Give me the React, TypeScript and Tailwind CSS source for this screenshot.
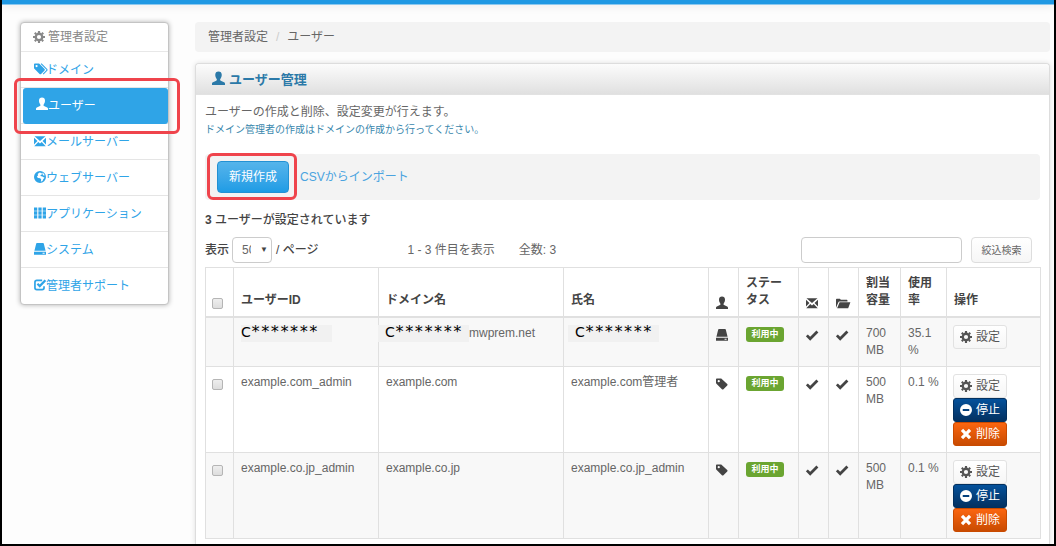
import type { ReactNode } from 'react';

type IconName =
  | 'cog'
  | 'tags'
  | 'tag'
  | 'user'
  | 'mail'
  | 'globe'
  | 'grid'
  | 'drive'
  | 'check'
  | 'ok'
  | 'folder'
  | 'minus'
  | 'remove';

const shapes: Record<IconName, ReactNode> = {
  cog: (
    <>
      <circle cx="7" cy="7" r="3.8" fill="none" stroke="currentColor" strokeWidth="2.7" />
      <path
        d="M7 0v2.500M7 11.500v2.500M0 7h2.500M11.500 7h2.500M2.100 2.100l1.600 1.600M10.300 10.300l1.600 1.600M2.100 11.900l1.600-1.600M10.300 3.700l1.600-1.600"
        stroke="currentColor"
        strokeWidth="2.5"
      />
    </>
  ),
  tags: (
    <>
      <path
        fillRule="evenodd"
        d="M0 1.6v4.1c0 .4.2.8.5 1.1l6 6c.6.6 1.200.6 1.800 0l4-4c.6-.6.6-1.200 0-1.800l-6-6C6 .7 5.600.6 5.200.6H1C.4.6 0 1 0 1.600zM3 2.300a1.300 1.300 0 1 1 0 2.600 1.300 1.300 0 0 1 0-2.600z"
      />
      <path d="M8.300.8l6.700 6.700c.4.4.4.8 0 1.200l-4.300 4.300" fill="none" stroke="currentColor" strokeWidth="1.200" />
    </>
  ),
  tag: (
    <path
      fillRule="evenodd"
      d="M0 1.800v3.800c0 .5.2.900.5 1.200l6.400 6.300c.6.6 1.200.6 1.800 0l4.400-4.300c.6-.6.6-1.200 0-1.800L6.700 1.100C6.400.8 6 .6 5.500.6H1.200C.5.6 0 1.100 0 1.800zM3.200 2.400a1.300 1.300 0 1 1 0 2.600 1.300 1.300 0 0 1 0-2.600z"
    />
  ),
  user: (
    <path d="M7-.5C4.800-.5 3.500.8 3.500 3c0 1.900.6 3.400 1.500 4.500.5.6.3 1.500-.4 1.800L1 11c-.7.300-1 .800-1 1.500V14h14v-1.500c0-.7-.3-1.200-1-1.500L9.400 9.300c-.7-.3-.9-1.200-.4-1.800.9-1.100 1.500-2.600 1.500-4.500C10.500.8 9.200-.5 7-.5z" />
  ),
  mail: <path d="M.6 1.500h12.800L7 7zM0 3.300 4 7 0 11zM14 3.300 10 7l4 4zM.3 13 5 8.300l2 1.600 2-1.600L13.700 13z" />,
  globe: (
    <path
      fillRule="evenodd"
      d="M7 0a7 7 0 1 1 0 14A7 7 0 0 1 7 0zM6.500 1.800 4.300 3.500l.5 1.600L3.300 6.600l1.400 1.500 2.500.3 1.200 1.500-.5 2.600 2-.7.8-2.300 1.600-1.700-2.500-1.500-2.300-.4.300-1.300 1.600-.7-.6-1.700zM9.600 1.800l.4 2.300 1.500 1.300.9-.3-.8-1.800z"
    />
  ),
  grid: (
    <path d="M0 .5h3.800v3.800H0zM5.100.5h3.800v3.800H5.100zM10.200.5H14v3.800h-3.800zM0 5.100h3.800v3.800H0zM5.100 5.100h3.800v3.800H5.100zM10.200 5.100H14v3.800h-3.800zM0 9.700h3.800v3.800H0zM5.100 9.700h3.800v3.800H5.100zM10.200 9.700H14v3.800h-3.800z" />
  ),
  drive: (
    <path
      fillRule="evenodd"
      d="M3.400 0h7.200c.4 0 .7.2.8.6L13.500 9H.5L2.600.6c.1-.4.400-.6.800-.6zM0 10.300h14v3.500H0zM10 11.500v1h2.400v-1z"
    />
  ),
  check: (
    <>
      <path
        d="M9.500 1.500H3.300c-1.300 0-2.200.9-2.200 2.200v6.500c0 1.300.9 2.200 2.200 2.200h6.200c1.300 0 2.200-.9 2.200-2.200V8.500"
        fill="none"
        stroke="currentColor"
        strokeWidth="2"
      />
      <path d="M4 5.600l2.700 2.700 6.600-6.800" fill="none" stroke="currentColor" strokeWidth="2.600" />
    </>
  ),
  ok: <path d="M1 7.400l3.900 4 8.400-8.500" fill="none" stroke="currentColor" strokeWidth="3.200" />,
  folder: (
    <path d="M0 12.500V3.200C0 2.500.5 2 1.200 2h3.400l1 1.200h6.600c.7 0 1.200.5 1.200 1.200v.8H4c-.6 0-1 .3-1.200.8zM4.200 6.200h12.600L14.200 13H1.300z" />
  ),
  minus: <path fillRule="evenodd" d="M7 0a7 7 0 1 1 0 14A7 7 0 0 1 7 0zM3.200 5.800v2.500h7.600V5.800z" />,
  remove: <path d="M2.300 2.300l9.400 9.400M11.700 2.300l-9.400 9.400" stroke="currentColor" strokeWidth="3.800" />,
};

function Icon({ name, className = 'h-3 w-3' }: { name: IconName; className?: string }) {
  return (
    <svg viewBox="0 0 14 14" className={`shrink-0 overflow-visible ${className}`} fill="currentColor" aria-hidden="true">
      {shapes[name]}
    </svg>
  );
}

const menu: { label: string; icon: IconName; active?: boolean }[] = [
  { label: 'ドメイン', icon: 'tags' },
  { label: 'ユーザー', icon: 'user', active: true },
  { label: 'メールサーバー', icon: 'mail' },
  { label: 'ウェブサーバー', icon: 'globe' },
  { label: 'アプリケーション', icon: 'grid' },
  { label: 'システム', icon: 'drive' },
  { label: '管理者サポート', icon: 'check' },
];

type User = {
  id: string;
  domain: string;
  name: string;
  role: IconName;
  quota: string;
  usage: string;
  masked?: boolean;
};

const users: User[] = [
  { id: 'C*******', domain: 'mwprem.net', name: 'C*******', role: 'drive', quota: '700 MB', usage: '35.1 %', masked: true },
  { id: 'example.com_admin', domain: 'example.com', name: 'example.com管理者', role: 'tag', quota: '500 MB', usage: '0.1 %' },
  { id: 'example.co.jp_admin', domain: 'example.co.jp', name: 'example.co.jp_admin', role: 'tag', quota: '500 MB', usage: '0.1 %' },
];

const th = 'border border-[#e0e0e0] border-b-2 p-[7px] text-left align-bottom font-bold';
const td = 'border border-[#e0e0e0] pt-[7px] pr-1 pl-[7px] align-top';
const box =
  '-ml-px block h-[11px] w-[11px] appearance-none rounded-[2px] border border-[#b5b5b5] bg-gradient-to-b from-[#eeeeee] to-[#dddddd]';

function Masked({ className = '' }: { className?: string }) {
  return (
    <span className={`flex h-[17px] w-[91px] items-start bg-[#f1f1f1] text-black ${className}`}>
      <span className="font-['DejaVu_Sans',sans-serif] text-sm leading-[14px]">C</span>
      <span className="font-['DejaVu_Sans_Mono',monospace] text-base leading-[14px]">*******</span>
    </span>
  );
}

function Highlight({ className }: { className: string }) {
  return <span className={`pointer-events-none absolute z-10 rounded-md border-3 border-[#ef444c] ${className}`} />;
}

function Sidebar() {
  return (
    <nav className="w-[149px] shrink-0 self-start rounded border border-[#c4c4c4] bg-white shadow-[0_0_5px_rgba(0,0,0,0.3)]">
      <h2 className="flex h-[29px] items-center gap-[3px] border-b border-[#e8e8e8] px-3 text-[#888888]">
        <Icon name="cog" />
        管理者設定
      </h2>
      <ul>
        {menu.map((m) => (
          <li key={m.label} className="relative h-9 border-b border-[#e5e5e5] last:border-transparent">
            <a
              href="#"
              className={
                m.active
                  ? 'ml-0.5 flex h-9 items-center rounded-[3px] bg-[#2fa4e7] px-[13px] text-white'
                  : 'flex h-full items-center px-[13px] pt-0.5 text-[#2fa4e7]'
              }
            >
              <Icon name={m.icon} className="mb-1 h-3 w-3" />
              {m.label}
            </a>
            {m.active && <Highlight className="-top-[10px] -right-3 -bottom-[11px] -left-[7px]" />}
          </li>
        ))}
      </ul>
    </nav>
  );
}

function ActionButton({ icon, label, tone }: { icon: IconName; label: string; tone: string }) {
  return (
    <button type="button" className={`flex h-6 w-[54px] items-center justify-center gap-1 rounded-[3px] border ${tone}`}>
      <Icon name={icon} />
      {label}
    </button>
  );
}

function UserTable() {
  return (
    <table className="mt-1 w-full table-fixed border-collapse">
      <colgroup>
        <col className="w-[28px]" />
        <col className="w-[145px]" />
        <col className="w-[185px]" />
        <col className="w-[145px]" />
        <col className="w-[30px]" />
        <col className="w-[60px]" />
        <col className="w-[30px]" />
        <col className="w-[30px]" />
        <col className="w-[42px]" />
        <col className="w-[46px]" />
        <col className="w-[94px]" />
      </colgroup>
      <thead className="text-[#444444]">
        <tr>
          <th className={th}>
            <input type="checkbox" aria-label="すべて選択" className={box} />
          </th>
          <th className={th}>ユーザーID</th>
          <th className={th}>ドメイン名</th>
          <th className={th}>氏名</th>
          <th className={th}><Icon name="user" /></th>
          <th className={th}>ステータス</th>
          <th className={th}><Icon name="mail" /></th>
          <th className={th}><Icon name="folder" /></th>
          <th className={th}>割当容量</th>
          <th className={th}>使用率</th>
          <th className={th}>操作</th>
        </tr>
      </thead>
      <tbody>
        {users.map((u) => (
          <tr key={u.domain} className="odd:bg-[#f8f8f8]">
            <td className={td}>
              {!u.masked && <input type="checkbox" aria-label={u.id} className={`mt-[5px] ${box}`} />}
            </td>
            <td className={td}>{u.masked ? <Masked /> : u.id}</td>
            <td className={td}>
              {u.masked ? (
                <span className="-ml-2 flex">
                  <Masked className="pl-[7px]" />
                  {u.domain}
                </span>
              ) : (
                u.domain
              )}
            </td>
            <td className={td}>{u.masked ? <Masked className="-ml-[3px] pl-[7px]" /> : u.name}</td>
            <td className={`${td} text-[#444444]`}>
              <span className="flex h-[19px] items-center"><Icon name={u.role} /></span>
            </td>
            <td className={td}>
              <span className="mt-0.5 inline-flex h-[15px] w-[38px] items-center justify-center rounded-[3px] bg-[#6ba531] text-[9px] leading-none font-bold text-white">
                利用中
              </span>
            </td>
            <td className={`${td} text-[#444444]`}>
              <span className="flex h-[19px] items-center"><Icon name="ok" /></span>
            </td>
            <td className={`${td} text-[#444444]`}>
              <span className="flex h-[19px] items-center"><Icon name="ok" /></span>
            </td>
            <td className={`${td} pb-[7px]`}>{u.quota}</td>
            <td className={td}>{u.usage}</td>
            <td className={`${td} pb-[6px]`}>
              <div className="-ml-px">
                <ActionButton
                  icon="cog"
                  label="設定"
                  tone="border-[#e2e2e2] bg-gradient-to-b from-white to-[#f6f6f6] text-[#555555]"
                />
                {!u.masked && (
                  <>
                    <ActionButton
                      icon="minus"
                      label="停止"
                      tone="border-[#02305f] bg-gradient-to-b from-[#04519b] to-[#033161] text-white"
                    />
                    <ActionButton
                      icon="remove"
                      label="削除"
                      tone="border-[#c94a00] bg-gradient-to-b from-[#fb6610] to-[#c94b02] text-white"
                    />
                  </>
                )}
              </div>
            </td>
          </tr>
        ))}
      </tbody>
    </table>
  );
}

export default function App() {
  return (
    <div className="flex min-h-screen flex-col border-x-2 border-b-2 border-black bg-[#fdfdfd] font-['Liberation_Sans','Noto_Sans_CJK_JP',sans-serif] text-xs leading-[17px] text-[#666666]">
      <header className="h-[5px] border-b border-[#8cc8ee] bg-[#1f98e3] shadow-[0_1px_8px_rgba(0,0,0,0.1)]" />
      <div className="flex flex-1 gap-[26px] pt-[17px] pr-1 pl-[18px]">
        <Sidebar />
        <main className="flex min-w-0 flex-1 flex-col">
          <ol className="flex h-[30px] items-center rounded bg-[#f3f3f3] px-[13px]">
            <li>管理者設定</li>
            <li className="px-2 text-[#cccccc]">/</li>
            <li>ユーザー</li>
          </ol>

          <section className="mt-[11px] flex-1 rounded-t border border-b-0 border-[#dddddd] bg-white shadow-[0_0_5px_rgba(0,0,0,0.12)]">
            <h1 className="flex h-[31px] items-center gap-1 rounded-t border-b border-[#e2e2e2] bg-gradient-to-b from-[#fcfcfc] to-[#e0e0e0] px-4 text-[13px] font-bold text-[#2b79a8]">
              <Icon name="user" className="mb-0.5 h-[13px] w-[13px]" />
              ユーザー管理
            </h1>
            <div className="px-[9px] pt-[9px] pb-1">
              <p>ユーザーの作成と削除、設定変更が行えます。</p>
              <p className="text-[10px] text-[#3a87ad]">ドメイン管理者の作成はドメインの作成から行ってください。</p>

              <div className="mt-4 flex h-[46px] items-center gap-[11px] rounded bg-[#f3f3f3] px-3">
                <div className="relative">
                  <button
                    type="button"
                    className="block h-8 rounded border border-[#2391d3] bg-gradient-to-b from-[#54b4eb] to-[#1d9ce5] px-[11px] text-white"
                  >
                    新規作成
                  </button>
                  <Highlight className="-top-2 -right-2 -bottom-[7px] -left-[10px]" />
                </div>
                <a href="#" className="text-[#4aa3df]">CSVからインポート</a>
              </div>

              <p className="mt-3 font-medium text-[#444444]">
                <span className="font-bold">3</span> ユーザーが設定されています
              </p>

              <div className="mt-2 flex h-[26px] items-center">
                <label htmlFor="per-page" className="mr-[3px] font-medium text-[#444444]">表示</label>
                <span className="relative">
                  <select
                    id="per-page"
                    defaultValue="50"
                    className="block h-[26px] w-10 appearance-none rounded border border-[#cccccc] bg-white pr-5 pl-[9px]"
                  >
                    <option>50</option>
                  </select>
                  <span className="pointer-events-none absolute top-1 right-1 text-[8px] text-[#444444]">▼</span>
                </span>
                <span className="ml-1 font-medium text-[#444444]">/ ページ</span>
                <span className="ml-[89px]">1 - 3 件目を表示</span>
                <span className="ml-6">全数: 3</span>
                <input
                  type="search"
                  aria-label="絞込検索"
                  className="ml-auto h-[26px] w-[161px] rounded border border-[#cccccc] bg-white px-2"
                />
                <button
                  type="button"
                  className="mr-2 ml-[9px] h-[26px] w-[61px] rounded border border-[#dddddd] bg-gradient-to-b from-white to-[#f6f6f6] text-[10px]"
                >
                  絞込検索
                </button>
              </div>

              <UserTable />
            </div>
          </section>
        </main>
      </div>
    </div>
  );
}
